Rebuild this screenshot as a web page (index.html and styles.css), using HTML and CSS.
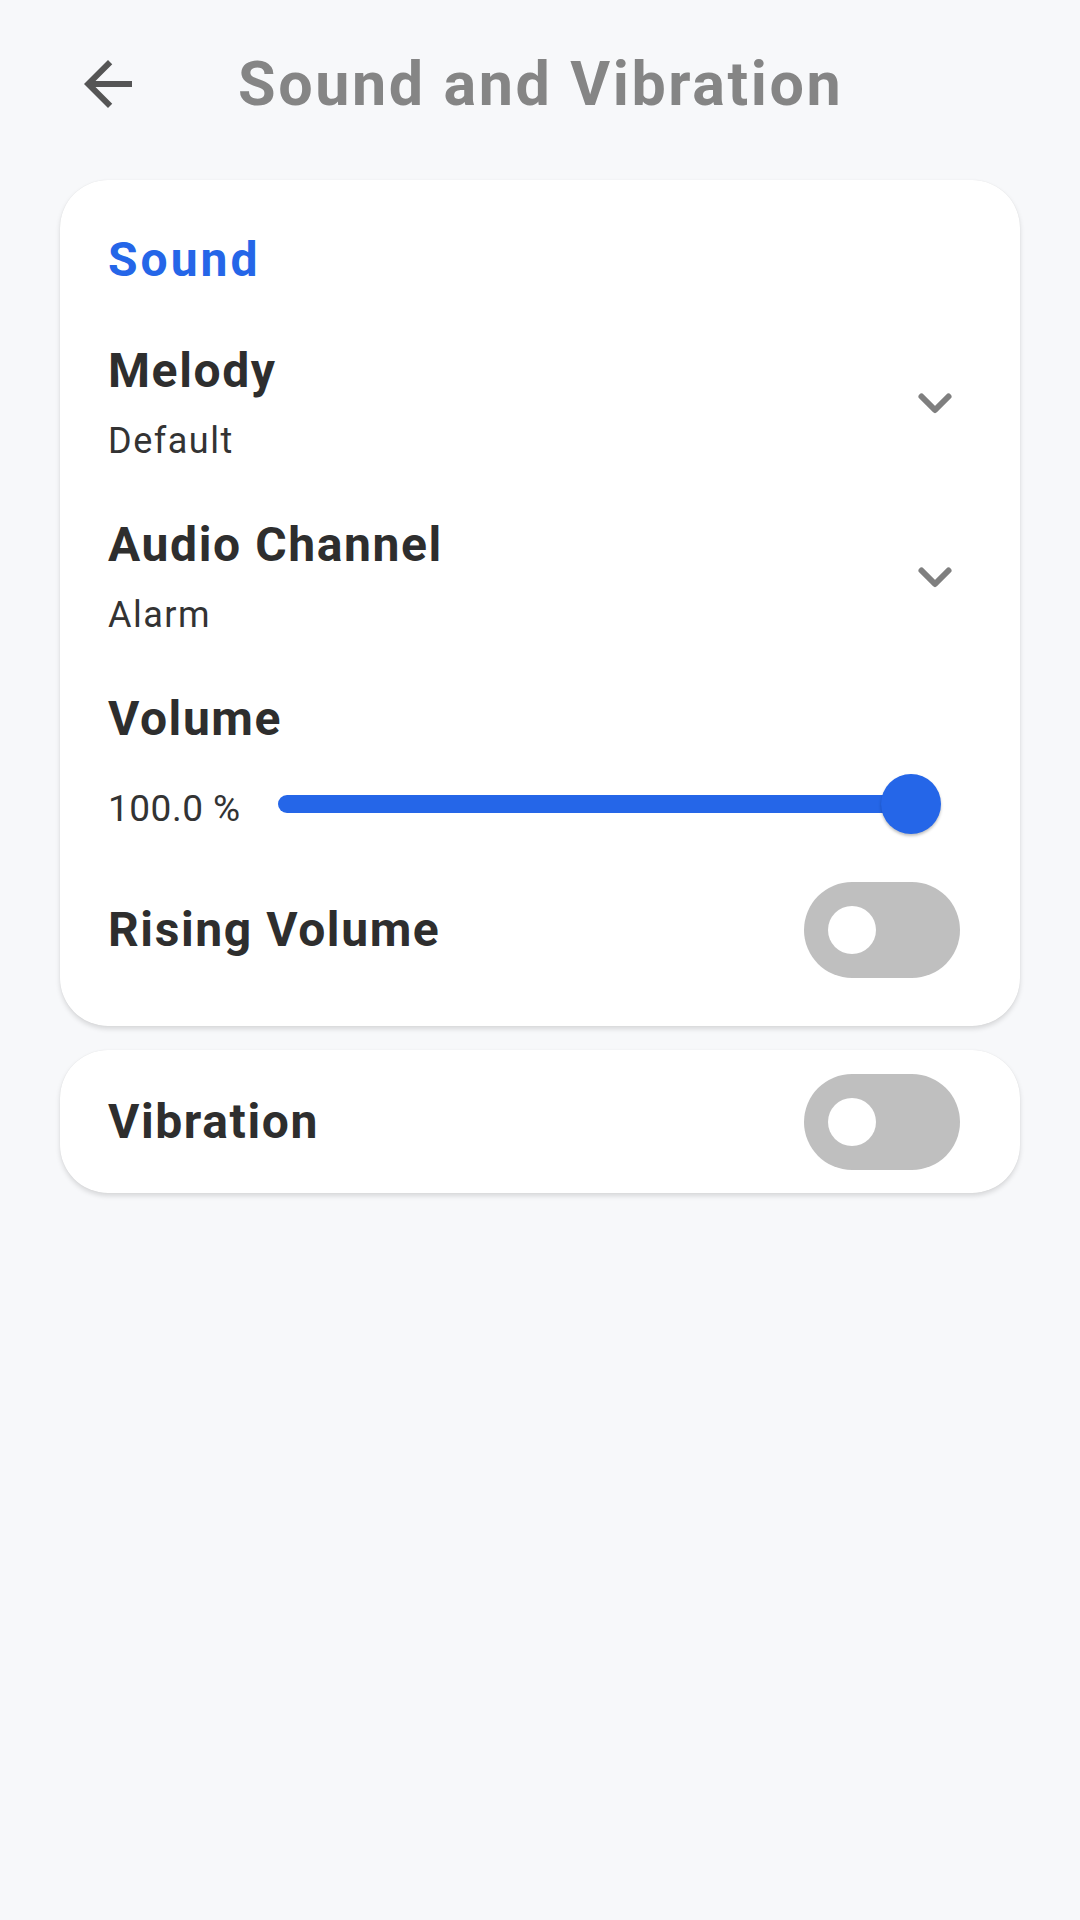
FILE: index.html
```html
<!DOCTYPE html>
<html lang="en">
<head>
<meta charset="utf-8">
<title>Sound and Vibration</title>
<link rel="stylesheet" href="styles.css">
</head>
<body>
<header class="header">
  <svg class="back" viewBox="0 0 24 24" aria-hidden="true"><path d="M20 11H7.83l5.59-5.59L12 4l-8 8 8 8 1.41-1.41L7.83 13H20v-2z"/></svg>
  <h1 class="title">Sound and Vibration</h1>
</header>
<main class="content">
  <section class="card">
    <h2 class="section">Sound</h2>
    <div class="row-select">
      <div class="texts">
        <div class="item-title">Melody</div>
        <div class="item-sub">Default</div>
      </div>
      <svg class="chev" viewBox="0 0 50 50" aria-hidden="true"><polyline points="11.5,18.5 25,32 38.5,18.5"/></svg>
    </div>
    <div class="row-select">
      <div class="texts">
        <div class="item-title">Audio Channel</div>
        <div class="item-sub">Alarm</div>
      </div>
      <svg class="chev" viewBox="0 0 50 50" aria-hidden="true"><polyline points="11.5,18.5 25,32 38.5,18.5"/></svg>
    </div>
    <div class="volume">
      <div class="item-title">Volume</div>
      <div class="slider-row">
        <div class="slider-label">100.0 %</div>
        <div class="slider">
          <div class="track"></div>
          <div class="thumb"></div>
        </div>
      </div>
    </div>
    <div class="row-toggle">
      <div class="item-title">Rising Volume</div>
      <div class="toggle"><div class="knob"></div></div>
    </div>
  </section>
  <section class="card card-single">
    <div class="row-toggle">
      <div class="item-title">Vibration</div>
      <div class="toggle"><div class="knob"></div></div>
    </div>
  </section>
</main>
</body>
</html>
```
FILE: styles.css
```css
* {
  box-sizing: border-box;
  margin: 0;
  padding: 0;
}

html, body {
  width: 1080px;
  height: 1920px;
}

body {
  background: #f7f8fa;
  font-family: Roboto, "Noto Sans", sans-serif;
  color: #2e2e2e;
}

.header {
  display: flex;
  align-items: center;
  height: 72px;
  margin-top: 48px;
  padding-left: 72px;
}

.back {
  width: 72px;
  height: 72px;
  fill: #555555;
  flex: 0 0 72px;
}

.title {
  margin-left: 94px;
  font-size: 61px;
  line-height: 70px;
  font-weight: 700;
  color: #858585;
  letter-spacing: 2.6px;
}

.content {
  padding: 60px 60px 0;
  display: flex;
  flex-direction: column;
  gap: 24px;
}

.card {
  background: #ffffff;
  border-radius: 48px;
  box-shadow: 0 3px 5px rgba(0, 0, 0, 0.13), 0 0 1px rgba(0, 0, 0, 0.10);
  padding: 52px 60px 48px 48px;
}

.card-single {
  padding: 23.5px 60px 23.5px 48px;
}

.section {
  font-size: 48px;
  line-height: 56px;
  font-weight: 700;
  color: #2566e8;
  letter-spacing: 3px;
}

.row-select {
  display: flex;
  align-items: center;
  justify-content: space-between;
  margin-top: 55px;
}

.item-title {
  font-size: 48px;
  line-height: 56px;
  font-weight: 700;
  color: #2e2e2e;
  letter-spacing: 1.6px;
}

.item-sub {
  margin-top: 21px;
  font-size: 36px;
  line-height: 42px;
  font-weight: 400;
  color: #333333;
  letter-spacing: 1.5px;
}

.chev {
  width: 50px;
  height: 50px;
  fill: none;
  stroke: #7f7f7f;
  stroke-width: 6;
  stroke-linecap: round;
  stroke-linejoin: round;
}

.volume {
  margin-top: 55px;
}

.slider-row {
  display: flex;
  align-items: center;
  height: 60px;
  margin-top: 27px;
}

.slider-label {
  flex: 0 0 170px;
  font-size: 37px;
  line-height: 42px;
  padding-top: 10px;
  color: #333333;
  letter-spacing: 0.5px;
}

.slider {
  flex: 1;
  position: relative;
  height: 60px;
  margin-right: 19px;
  display: flex;
  align-items: center;
}

.track {
  flex: 1;
  height: 18px;
  margin-right: 30px;
  border-radius: 9px;
  background: #2566e8;
}

.thumb {
  position: absolute;
  right: 0;
  top: 0;
  width: 60px;
  height: 60px;
  border-radius: 50%;
  background: #2566e8;
  box-shadow: 0 2px 3px rgba(0, 0, 0, 0.25);
}

.row-toggle {
  display: flex;
  align-items: center;
  justify-content: space-between;
  height: 96px;
  margin-top: 48px;
}

.card-single .row-toggle {
  margin-top: 0;
}

.toggle {
  width: 156px;
  height: 96px;
  border-radius: 48px;
  background: #bfbfbf;
  padding: 24px;
}

.knob {
  width: 48px;
  height: 48px;
  border-radius: 50%;
  background: #ffffff;
}
```
